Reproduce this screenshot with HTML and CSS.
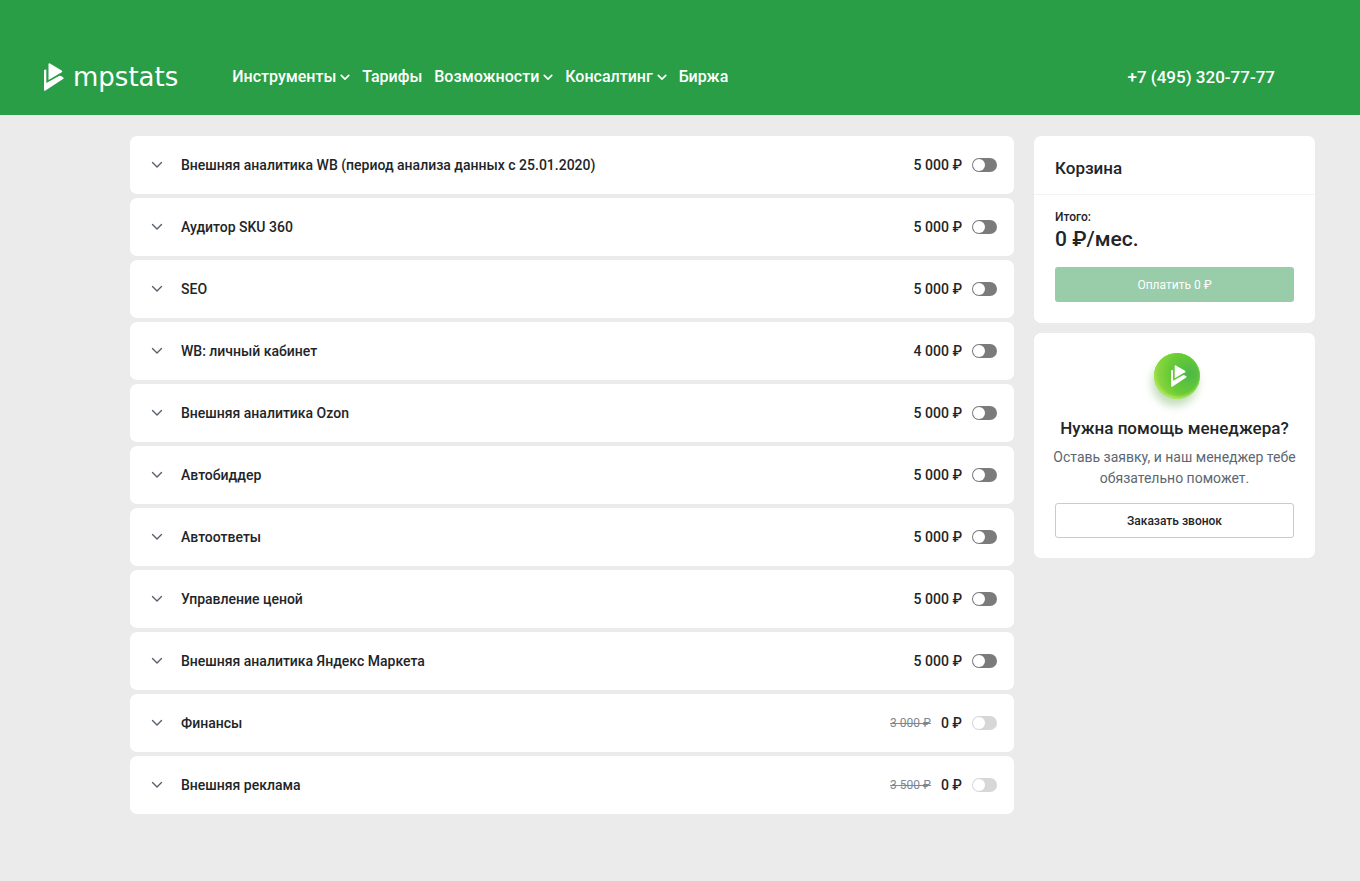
FILE: index.html
```html
<!DOCTYPE html>
<html lang="ru">
<head>
<meta charset="utf-8">
<meta name="viewport" content="width=device-width, initial-scale=1">
<title>mpstats</title>
<link rel="stylesheet" href="styles.css">
</head>
<body>
<svg width="0" height="0" class="sprite" aria-hidden="true">
  <symbol id="mark" viewBox="0 0 20 28">
    <path d="M4.500 1.200Q4.500 -.3 6 .5L17.600 7.400Q19 8.300 17.600 9.200L4.500 17Z"/>
    <path d="M0 7.300Q0 6.500 2.300 6.500V20L15 12.900Q16 12.500 17 13.100L19 14.300Q20.300 15.200 19 16L1.500 27.600Q0 28.300 0 26.800Z"/>
  </symbol>
  <symbol id="chevron" viewBox="0 0 12 8">
    <path d="M1.500 1.500L6 6L10.500 1.500" fill="none" stroke="currentColor" stroke-linecap="round" stroke-linejoin="round"/>
  </symbol>
</svg>

<header class="header">
  <a class="logo" href="#"><svg class="logo-mark"><use href="#mark"/></svg><span class="logo-text">mpstats</span></a>
  <nav class="nav">
    <button class="nav-item" type="button">Инструменты<svg class="nav-chevron"><use href="#chevron"/></svg></button>
    <a class="nav-item" href="#">Тарифы</a>
    <button class="nav-item" type="button">Возможности<svg class="nav-chevron"><use href="#chevron"/></svg></button>
    <button class="nav-item" type="button">Консалтинг<svg class="nav-chevron"><use href="#chevron"/></svg></button>
    <a class="nav-item" href="#">Биржа</a>
  </nav>
  <a class="phone" href="tel:+74953207777">+7 (495) 320-77-77</a>
</header>

<main class="page">
  <section class="modules">
    <div class="module">
      <button class="expand" type="button" aria-label="Подробнее"><svg class="expand-icon"><use href="#chevron"/></svg></button>
      <label class="title" for="m1">Внешняя аналитика WB (период анализа данных с 25.01.2020)</label>
      <span class="price">5 000 ₽</span>
      <input class="switch" type="checkbox" id="m1">
    </div>
    <div class="module">
      <button class="expand" type="button" aria-label="Подробнее"><svg class="expand-icon"><use href="#chevron"/></svg></button>
      <label class="title" for="m2">Аудитор SKU 360</label>
      <span class="price">5 000 ₽</span>
      <input class="switch" type="checkbox" id="m2">
    </div>
    <div class="module">
      <button class="expand" type="button" aria-label="Подробнее"><svg class="expand-icon"><use href="#chevron"/></svg></button>
      <label class="title" for="m3">SEO</label>
      <span class="price">5 000 ₽</span>
      <input class="switch" type="checkbox" id="m3">
    </div>
    <div class="module">
      <button class="expand" type="button" aria-label="Подробнее"><svg class="expand-icon"><use href="#chevron"/></svg></button>
      <label class="title" for="m4">WB: личный кабинет</label>
      <span class="price">4 000 ₽</span>
      <input class="switch" type="checkbox" id="m4">
    </div>
    <div class="module">
      <button class="expand" type="button" aria-label="Подробнее"><svg class="expand-icon"><use href="#chevron"/></svg></button>
      <label class="title" for="m5">Внешняя аналитика Ozon</label>
      <span class="price">5 000 ₽</span>
      <input class="switch" type="checkbox" id="m5">
    </div>
    <div class="module">
      <button class="expand" type="button" aria-label="Подробнее"><svg class="expand-icon"><use href="#chevron"/></svg></button>
      <label class="title" for="m6">Автобиддер</label>
      <span class="price">5 000 ₽</span>
      <input class="switch" type="checkbox" id="m6">
    </div>
    <div class="module">
      <button class="expand" type="button" aria-label="Подробнее"><svg class="expand-icon"><use href="#chevron"/></svg></button>
      <label class="title" for="m7">Автоответы</label>
      <span class="price">5 000 ₽</span>
      <input class="switch" type="checkbox" id="m7">
    </div>
    <div class="module">
      <button class="expand" type="button" aria-label="Подробнее"><svg class="expand-icon"><use href="#chevron"/></svg></button>
      <label class="title" for="m8">Управление ценой</label>
      <span class="price">5 000 ₽</span>
      <input class="switch" type="checkbox" id="m8">
    </div>
    <div class="module">
      <button class="expand" type="button" aria-label="Подробнее"><svg class="expand-icon"><use href="#chevron"/></svg></button>
      <label class="title" for="m9">Внешняя аналитика Яндекс Маркета</label>
      <span class="price">5 000 ₽</span>
      <input class="switch" type="checkbox" id="m9">
    </div>
    <div class="module">
      <button class="expand" type="button" aria-label="Подробнее"><svg class="expand-icon"><use href="#chevron"/></svg></button>
      <label class="title" for="m10">Финансы</label>
      <s class="old-price">3 000 ₽</s>
      <span class="price">0 ₽</span>
      <input class="switch" type="checkbox" id="m10" disabled>
    </div>
    <div class="module">
      <button class="expand" type="button" aria-label="Подробнее"><svg class="expand-icon"><use href="#chevron"/></svg></button>
      <label class="title" for="m11">Внешняя реклама</label>
      <s class="old-price">3 500 ₽</s>
      <span class="price">0 ₽</span>
      <input class="switch" type="checkbox" id="m11" disabled>
    </div>
  </section>

  <aside class="side">
    <section class="card">
      <h2 class="cart-title">Корзина</h2>
      <div class="cart-body">
        <div class="total-label">Итого:</div>
        <div class="total">0 ₽/мес.</div>
        <button class="button pay" type="button" disabled>Оплатить 0 ₽</button>
      </div>
    </section>
    <section class="card help">
      <span class="badge"><svg class="badge-mark"><use href="#mark"/></svg></span>
      <h2 class="help-title">Нужна помощь менеджера?</h2>
      <p class="help-text">Оставь заявку, и наш менеджер тебе обязательно поможет.</p>
      <button class="button call" type="button">Заказать звонок</button>
    </section>
  </aside>
</main>
</body>
</html>
```
FILE: styles.css
```css
* { box-sizing: border-box; }
body {
  margin: 0;
  background: #ebebeb;
  color: #212529;
  font-family: Roboto, "Liberation Sans", sans-serif;
  font-size: 14px;
  line-height: 20px;
}
button { font: inherit; color: inherit; background: none; border: 0; padding: 0; cursor: pointer; }
a { color: inherit; text-decoration: none; }
svg { display: block; fill: currentColor; flex: none; }
.sprite { position: absolute; }

.header {
  display: flex;
  align-items: center;
  padding: 57px 85px 18px 44px;
  background: #299e46;
  color: #fff;
}
.logo { display: flex; align-items: center; gap: 9px; height: 40px; }
.logo-mark { width: 20px; height: 28px; }
.logo-text { font: 400 26px/32px "DejaVu Sans", sans-serif; }
.nav { display: flex; align-items: center; gap: 12px; margin-left: 54px; flex: 1; }
.nav-item { display: flex; align-items: center; gap: 4px; font-size: 16px; font-weight: 500; line-height: 20px; }
.nav-chevron { width: 10px; height: 7px; stroke-width: 2; }
.phone { font-size: 17px; font-weight: 500; line-height: 24px; }

.page {
  display: grid;
  grid-template-columns: minmax(0, 1fr) 281px;
  align-items: start;
  gap: 20px;
  padding: 21px 45px 66px 130px;
}
.modules { display: grid; gap: 4px; }
.module {
  display: flex;
  align-items: center;
  min-height: 58px;
  padding: 0 17px 0 19px;
  background: #fff;
  border-radius: 7px;
}
.expand { padding: 4px 4px 4px 2px; margin-right: 14px; color: #56606b; }
.expand-icon { width: 12px; height: 8px; stroke-width: 1.400; }
.title { flex: 1; font-weight: 500; }
.price { font-weight: 500; }
.old-price { margin-right: 10px; color: #7d8792; font-size: 12px; }
.switch {
  appearance: none;
  width: 25px;
  height: 14px;
  margin: 0 0 0 10px;
  padding: 1px;
  border-radius: 7px;
  background: #7b7b7b;
}
.switch::before { content: ""; display: block; width: 12px; height: 12px; border-radius: 50%; background: #fff; }
.switch:checked { background: #299e46; }
.switch:checked::before { margin-left: auto; }
.switch:disabled { background: #d7d7d7; }

.side { display: grid; grid-template-columns: minmax(0, 1fr); gap: 10px; }
.card { background: #fff; border-radius: 7px; }
.cart-title { margin: 0; padding: 20px 21px 14px; border-bottom: 1px solid #f3f3f3; font-size: 17px; font-weight: 500; line-height: 24px; }
.cart-body { padding: 14px 21px 21px; }
.total-label { font-size: 12px; font-weight: 500; line-height: 16px; }
.total { margin-bottom: 14px; font-size: 21px; font-weight: 500; line-height: 28px; }
.button { display: block; width: 100%; height: 35px; border-radius: 3px; font-size: 12px; line-height: 16px; font-weight: 500; }
.pay { background: #99cca9; color: #fff; font-weight: 400; }
.help { display: flex; flex-direction: column; align-items: center; padding: 20px 21px; text-align: center; }
.badge {
  display: flex;
  align-items: center;
  justify-content: center;
  width: 46px;
  height: 46px;
  margin: 0 0 17px 4px;
  border-radius: 50%;
  color: #fff;
  background: radial-gradient(circle at 78% 45%, #4db848, #6bcb36 50%, #a8e044 95%);
  box-shadow: inset 0 1px 2px #5fd928, inset 1px -2px 3px #b9e86a, -2px 7px 9px #4f9a3355;
}
.badge-mark { width: 16px; height: 22px; margin-left: 4px; }
.help-title { margin: 0 0 7px; font-size: 17px; font-weight: 500; line-height: 24px; white-space: nowrap; }
.help-text { margin: 0 -4px 14px; color: #5d6772; line-height: 21px; }
.call { border: 1px solid #c9cad2; }
```
